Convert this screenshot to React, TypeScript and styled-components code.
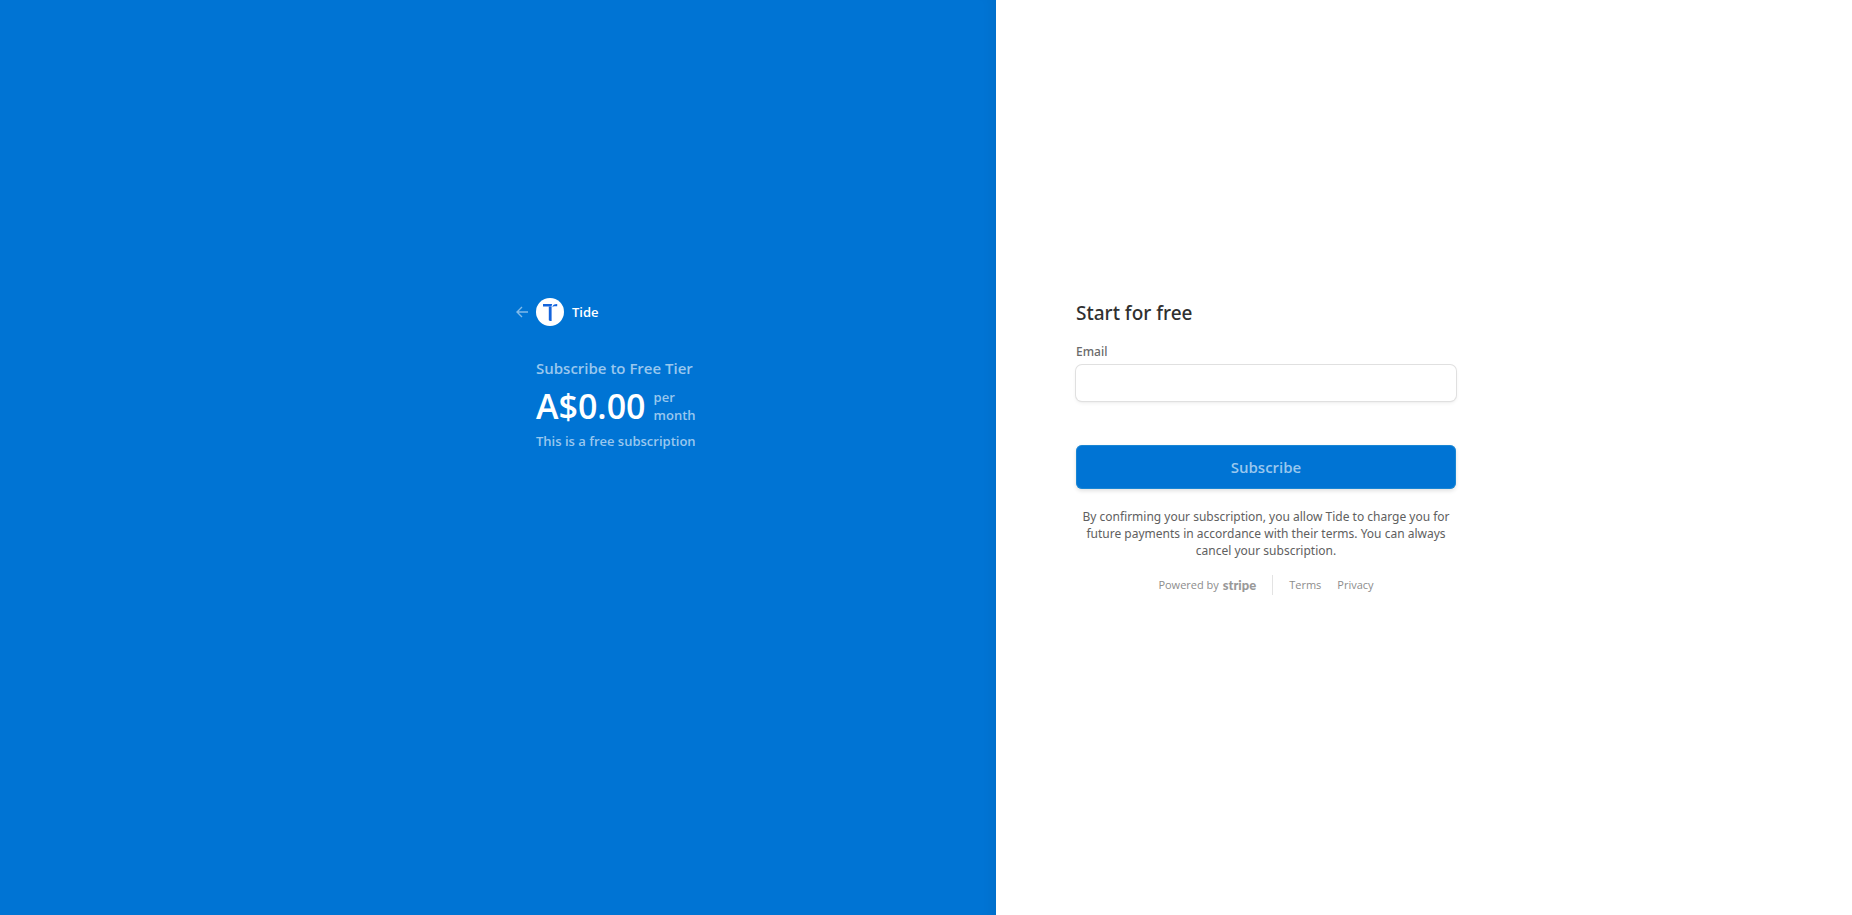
import React from "react";
import styled, { createGlobalStyle } from "styled-components";

const GlobalStyle = createGlobalStyle`
  *, *::before, *::after { box-sizing: border-box; }
  body {
    margin: 0;
    background: #fff;
    font-family: "Segoe UI", "Open Sans", "Noto Sans", sans-serif;
    -webkit-font-smoothing: antialiased;
  }
  h1, h2, p { margin: 0; }
`;

const Page = styled.div`
  display: grid;
  grid-template-columns: minmax(0, 249fr) minmax(0, 214fr);
  min-height: 100vh;
`;

const Overview = styled.section`
  display: flex;
  justify-content: flex-end;
  padding: 298px 80px 80px;
  background: #0074d4;
  box-shadow: inset -12px 0 12px -8px rgba(0, 0, 0, 0.05);
  color: #fff;
`;

const OverviewContent = styled.div`
  width: 100%;
  max-width: 380px;
`;

const Payment = styled.main`
  padding: 300px 80px 80px;
`;

const PaymentContent = styled.div`
  width: 100%;
  max-width: 380px;
`;

const BackLink = styled.a`
  display: inline-flex;
  align-items: center;
  gap: 8px;
  height: 28px;
  margin-left: -20px;
  color: #fff;
  font-size: 13px;
  font-weight: 600;
  line-height: 20px;
  text-decoration: none;
`;

const Arrow = styled.svg`
  width: 12px;
  height: 12px;
  opacity: 0.5;
`;

const Logo = styled.svg`
  width: 28px;
  height: 28px;
`;

const PlanName = styled.h1`
  margin-top: 30px;
  color: #99c7ee;
  font-size: 15px;
  font-weight: 600;
  line-height: 24px;
`;

const PriceRow = styled.div`
  display: flex;
  align-items: center;
  gap: 8px;
  margin: 4px 0;
`;

const Price = styled.span`
  font-size: 34px;
  font-weight: 600;
  line-height: 44px;
`;

const Note = styled.span`
  color: #99c7ee;
  font-size: 13px;
  font-weight: 600;
  line-height: 18px;
`;

const Detail = styled.p`
  color: #99c7ee;
  font-size: 13px;
  font-weight: 600;
  line-height: 18px;
`;

const Title = styled.h2`
  color: #303030;
  font-family: "Segoe UI", "Noto Sans", sans-serif;
  font-size: 19px;
  font-weight: 500;
  line-height: 26px;
`;

const Label = styled.label`
  display: block;
  margin: 18px 0 5px;
  color: #6a6a6a;
  font-family: "Segoe UI", "Noto Sans", sans-serif;
  font-size: 12px;
  font-weight: 500;
  line-height: 16px;
`;

const EmailInput = styled.input`
  display: block;
  width: 100%;
  height: 36px;
  padding: 8px 12px;
  border: 0;
  border-radius: 6px;
  background: #fff;
  box-shadow: 0 0 0 1px #e0e0e0, 0 2px 4px rgba(0, 0, 0, 0.07), 0 1px 2px rgba(0, 0, 0, 0.05);
  font: inherit;
  font-size: 16px;
`;

const SubmitButton = styled.button`
  display: block;
  width: 100%;
  height: 44px;
  margin-top: 44px;
  border: 0;
  border-radius: 6px;
  background: #0074d4;
  color: #99c7ee;
  box-shadow: inset 0 0 0 1px rgba(50, 151, 211, 0.5), 0 2px 4px rgba(0, 0, 0, 0.12);
  font: inherit;
  font-size: 15px;
  font-weight: 600;
`;

const Terms = styled.p`
  margin-top: 19px;
  color: #606060;
  font-family: "Segoe UI", "Noto Sans", sans-serif;
  font-size: 12px;
  line-height: 17px;
  text-align: center;
`;

const Footer = styled.footer`
  display: flex;
  align-items: center;
  justify-content: center;
  margin-top: 16px;
  color: #8d8d8d;
  font-size: 11px;
  line-height: 20px;
`;

const FooterLink = styled.a`
  color: inherit;
  text-decoration: none;
`;

const PoweredBy = styled(FooterLink)`
  display: flex;
  align-items: center;
  gap: 4px;
  padding-right: 16px;
  border-right: 1px solid #e3e3e3;
`;

const Wordmark = styled.span`
  color: #999;
  font-family: Lato, sans-serif;
  font-size: 13px;
  font-weight: 900;
`;

const Links = styled.nav`
  display: flex;
  gap: 16px;
  padding-left: 16px;
`;

export default function App() {
  return (
    <>
      <GlobalStyle />
      <Page>
        <Overview>
          <OverviewContent>
            <BackLink href="#">
              <Arrow viewBox="0 0 12 12" fill="none" stroke="#fff" strokeWidth="1.4" aria-hidden="true">
                <path d="M12 6H1M6 1L1 6l5 5" />
              </Arrow>
              <Logo viewBox="0 0 28 28" aria-hidden="true">
                <circle cx="14" cy="14" r="14" fill="#fff" />
                <path d="M7 6h9.2l-.8 2.4H7z" fill="#1464dc" />
                <path d="M12.8 8.4h2.8V23h-1.6l-1.2-.8z" fill="#1464dc" />
                <path d="M16.4 9.2C16.8 7 18 6 21.2 6v2.2h-3.4z" fill="#1464dc" />
              </Logo>
              <span>Tide</span>
            </BackLink>
            <PlanName>Subscribe to Free Tier</PlanName>
            <PriceRow>
              <Price>A$0.00</Price>
              <Note>
                per
                <br />
                month
              </Note>
            </PriceRow>
            <Detail>This is a free subscription</Detail>
          </OverviewContent>
        </Overview>
        <Payment>
          <PaymentContent>
            <form onSubmit={(event) => event.preventDefault()}>
              <Title>Start for free</Title>
              <Label htmlFor="email">Email</Label>
              <EmailInput id="email" type="email" autoComplete="email" />
              <SubmitButton type="submit">Subscribe</SubmitButton>
            </form>
            <Terms>
              By confirming your subscription, you allow Tide to charge you for future payments in
              accordance with their terms. You can always cancel your subscription.
            </Terms>
            <Footer>
              <PoweredBy href="#">
                Powered by <Wordmark>stripe</Wordmark>
              </PoweredBy>
              <Links aria-label="Legal">
                <FooterLink href="#">Terms</FooterLink>
                <FooterLink href="#">Privacy</FooterLink>
              </Links>
            </Footer>
          </PaymentContent>
        </Payment>
      </Page>
    </>
  );
}
